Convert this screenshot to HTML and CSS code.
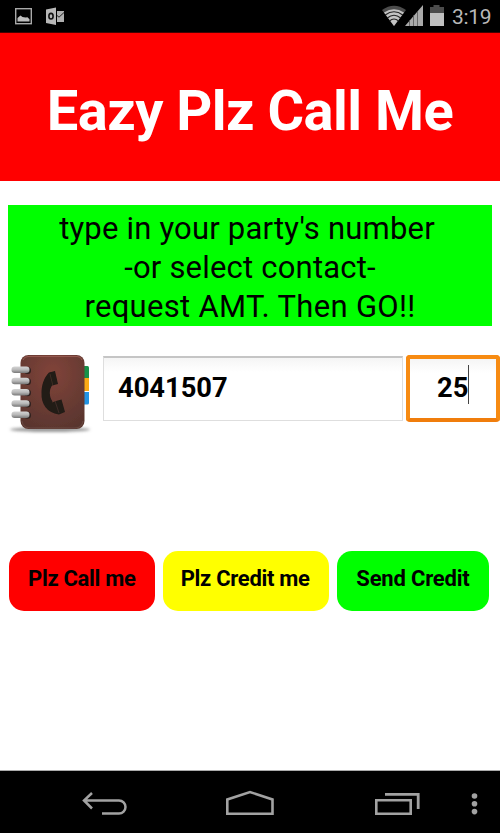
FILE: index.html
```html
<!DOCTYPE html>
<html lang="en">
<head>
<meta charset="utf-8">
<title>Eazy Plz Call Me</title>
<link rel="stylesheet" href="styles.css">
</head>
<body>
<header class="status">
  <svg class="notifications" width="60" height="32" viewBox="0 0 60 32">
    <rect x="0.7" y="8.7" width="15.6" height="15" fill="none" stroke="#a9a9a9" stroke-width="1.4"/>
    <path d="M2.500 21.500V18l3-2.500 2 1.500 3 .5 2-.3 2 2v2.300z" fill="#bdbdbd"/>
    <path d="M31 9.500l10-2v17.500l-10-2z" fill="#b8b8b8"/>
    <ellipse cx="36" cy="16.200" rx="2.100" ry="2.800" fill="none" stroke="#111" stroke-width="1.600"/>
    <path d="M42 11h7v11h-7z" fill="#b0b0b0"/>
    <path d="M42 15.500l2 1.700 5-4.700" fill="none" stroke="#222"/>
  </svg>
  <svg class="signals" width="64" height="32" viewBox="0 0 64 32">
    <path d="M0 10Q12 1.500 24 10L12 26z" fill="#4c4c4c"/>
    <path d="M2 12.500Q12 6 22 12.500L12 26z" fill="#c4c4c4"/>
    <path d="M3.200 15Q12 8.500 20.800 15M5.300 18Q12 12.500 18.700 18M7.500 21Q12 17 16.500 21" fill="none" stroke="#222" stroke-width="1.100"/>
    <path d="M23 26L41 5v21z" fill="#aaa"/>
    <path d="M27.500 20v6M31.500 15v11M35.500 11v15" stroke="#555" stroke-width=".8"/>
    <path d="M48 7h3.500V5h6v2H62v6H48z" fill="#4c4c4c"/>
    <path d="M48 13h14v13H48z" fill="#c0c0c0"/>
  </svg>
  <span class="time">3:19</span>
</header>
<h1 class="title"><span>Eazy Plz Call Me</span></h1>
<main>
  <p class="hint"><span class="l1">type in your party's number</span><span class="l2">-or select contact-</span><span class="l3">request AMT. Then GO!!</span></p>
  <div class="entry">
    <svg class="contacts" width="103" height="84" viewBox="0 0 103 84">
      <defs>
        <radialGradient id="leather" cx=".5" cy=".25" r=".8"><stop stop-color="#81443a"/><stop offset="1" stop-color="#59352e"/></radialGradient>
        <linearGradient id="ring" x2="0" y2="1"><stop stop-color="#d5d5d5"/><stop offset=".5" stop-color="#b8b8b8"/><stop offset="1" stop-color="#777"/></linearGradient>
        <filter id="soft" x="-.2" y="-1" width="1.400" height="3"><feGaussianBlur stdDeviation="1.600"/></filter>
        <filter id="edge"><feGaussianBlur stdDeviation=".5"/></filter>
      </defs>
      <ellipse cx="50" cy="74.500" rx="40" ry="2.600" fill="#999" filter="url(#soft)"/>
      <g filter="url(#edge)">
        <path d="M82 11h5.500q1.500 0 1.500 1.500V23h-7z" fill="#16914a"/>
        <path d="M82 23h7v13h-7z" fill="#f9aa14"/>
        <path d="M82 37h7v11q0 1.500-1.500 1.500H82z" fill="#2494e4"/>
        <rect x="20.500" y="0" width="64" height="74" rx="8" fill="url(#leather)"/>
        <path d="M23 5q1-3.500 5-3.500h49q4 0 5 3.500" fill="none" stroke="#935950"/>
        <path d="M22 66q1 7 8 7h45q7 0 8-7" fill="none" stroke="#6b4941"/>
        <path d="M49 17.500l6-1.500 3 13-6 1.500c-3 4-3 11 .5 16l-.5 1 4-1.500 5.500-1.500 3.500 12.500-6 2.500C47 58 41 49 41.500 38c0-8 2.500-15.500 7.500-20.500z" fill="#211b17"/>
        <path d="M50 19l3 12M55 46l4 12" stroke="#4c332b" stroke-width=".7"/>
        <g fill="#30211f"><circle cx="27.500" cy="15.500" r="3.500"/><circle cx="27.500" cy="26.500" r="3.500"/><circle cx="27.500" cy="37.800" r="3.500"/><circle cx="27.500" cy="49" r="3.500"/><circle cx="27.500" cy="60.300" r="3.500"/></g>
        <g fill="url(#ring)"><rect x="11.500" y="11.500" width="18" height="6.500" rx="3.200"/><rect x="11.500" y="22.700" width="18" height="6.500" rx="3.200"/><rect x="11.500" y="34" width="18" height="6.500" rx="3.200"/><rect x="11.500" y="45.200" width="18" height="6.500" rx="3.200"/><rect x="11.500" y="56.500" width="18" height="6.500" rx="3.200"/></g>
      </g>
    </svg>
    <div class="field number"><span>4041507</span></div>
    <div class="field amount"><span>25</span><i class="caret"></i></div>
  </div>
  <div class="actions">
    <button class="call"><span>Plz Call me</span></button>
    <button class="credit"><span>Plz Credit me</span></button>
    <button class="send"><span>Send Credit</span></button>
  </div>
</main>
<nav class="navbar">
  <svg width="500" height="62" viewBox="0 0 500 62" fill="none" stroke="#a2a2a2">
    <path d="M84 29.500h35a6.500 6.500 0 0 1 0 13h-17M92 22l-8 7.500 8 8" stroke-width="2.500"/>
    <path d="M227.300 42.700V28.500L250 21l22.500 7.500v14.200z" stroke-width="2.600"/>
    <path d="M376.300 29.300h34.400v13.400h-34.400z" stroke-width="2.600"/>
    <path d="M385 23.300h33.200V38" stroke-width="2.800"/>
    <g fill="#a2a2a2" stroke="none"><circle cx="474.500" cy="25" r="2.800"/><circle cx="474.500" cy="32.800" r="2.800"/><circle cx="474.500" cy="40.600" r="2.800"/></g>
  </svg>
</nav>
</body>
</html>
```
FILE: styles.css
```css
* { box-sizing: border-box; }
body {
  margin: 0;
  width: 500px;
  height: 833px;
  display: flex;
  flex-direction: column;
  background: #fff;
  color: #000;
  font-family: Roboto, sans-serif;
  overflow: hidden;
}
svg { display: block; flex: none; }
.status {
  height: 33px;
  display: flex;
  background: #000;
  border-bottom: 1px solid #400;
}
.notifications { margin-left: 15px; }
.signals { margin-left: 307px; }
.time {
  margin-left: 6px;
  color: #b8b8b8;
  font-size: 21px;
  letter-spacing: -.3px;
  line-height: 34px;
  white-space: nowrap;
}
.title {
  height: 148px;
  margin: 0;
  padding-top: 45px;
  background: #f00;
  color: #fff;
  text-align: center;
  font-size: 56px;
  letter-spacing: -.52px;
  line-height: 66px;
  font-weight: 700;
  white-space: nowrap;
}
main { flex: 1; padding-top: 24px; }
.hint {
  height: 121px;
  margin: 0 8px;
  padding-top: 4px;
  display: flex;
  flex-direction: column;
  align-items: center;
  background: #0f0;
  font-size: 31px;
  letter-spacing: .2px;
  line-height: 39px;
  white-space: nowrap;
}
.l1 { margin-right: 6px; }
.l3 { letter-spacing: .32px; }
.entry { display: flex; margin-top: 29px; height: 84px; }
.field {
  font-size: 27.300px;
  line-height: 60px;
  font-weight: 700;
}
.number {
  width: 300px;
  height: 65px;
  margin-top: 1px;
  padding-left: 14px;
  border: 1px solid #dedede;
  border-top: 2px solid #c5c5c5;
  background: linear-gradient(#f5f5f5, #fff 14px);
}
.amount {
  display: flex;
  align-items: flex-start;
  width: 94px;
  height: 67px;
  margin-left: 3px;
  padding-left: 27px;
  border: 4px solid #f78b12;
  border-bottom-color: #f07d0c;
  border-radius: 4px;
  background: linear-gradient(#f5f5f5, #fff 14px);
}
.amount span { line-height: 58px; }
.caret { width: 1px; height: 39px; background: #444; margin-top: 6px; }
.actions { display: flex; margin: 112px 11px 0 9px; gap: 8px; }
button {
  height: 60px;
  padding: 0 0 5px 19px;
  border: 0;
  border-radius: 15px;
  color: #000;
  font: 700 22px/26px Roboto, sans-serif;
  letter-spacing: -.3px;
  text-align: left;
  white-space: nowrap;
}
button span { display: block; }
.call { width: 146px; background: #f00; }
.call span { width: 108px; overflow: hidden; }
.credit { width: 167px; padding-left: 18px; background: #ff0; }
.send { width: 152px; letter-spacing: -.2px; background: #0f0; }
.navbar { height: 63px; background: #000; border-top: 1px solid #aaa; }
```
